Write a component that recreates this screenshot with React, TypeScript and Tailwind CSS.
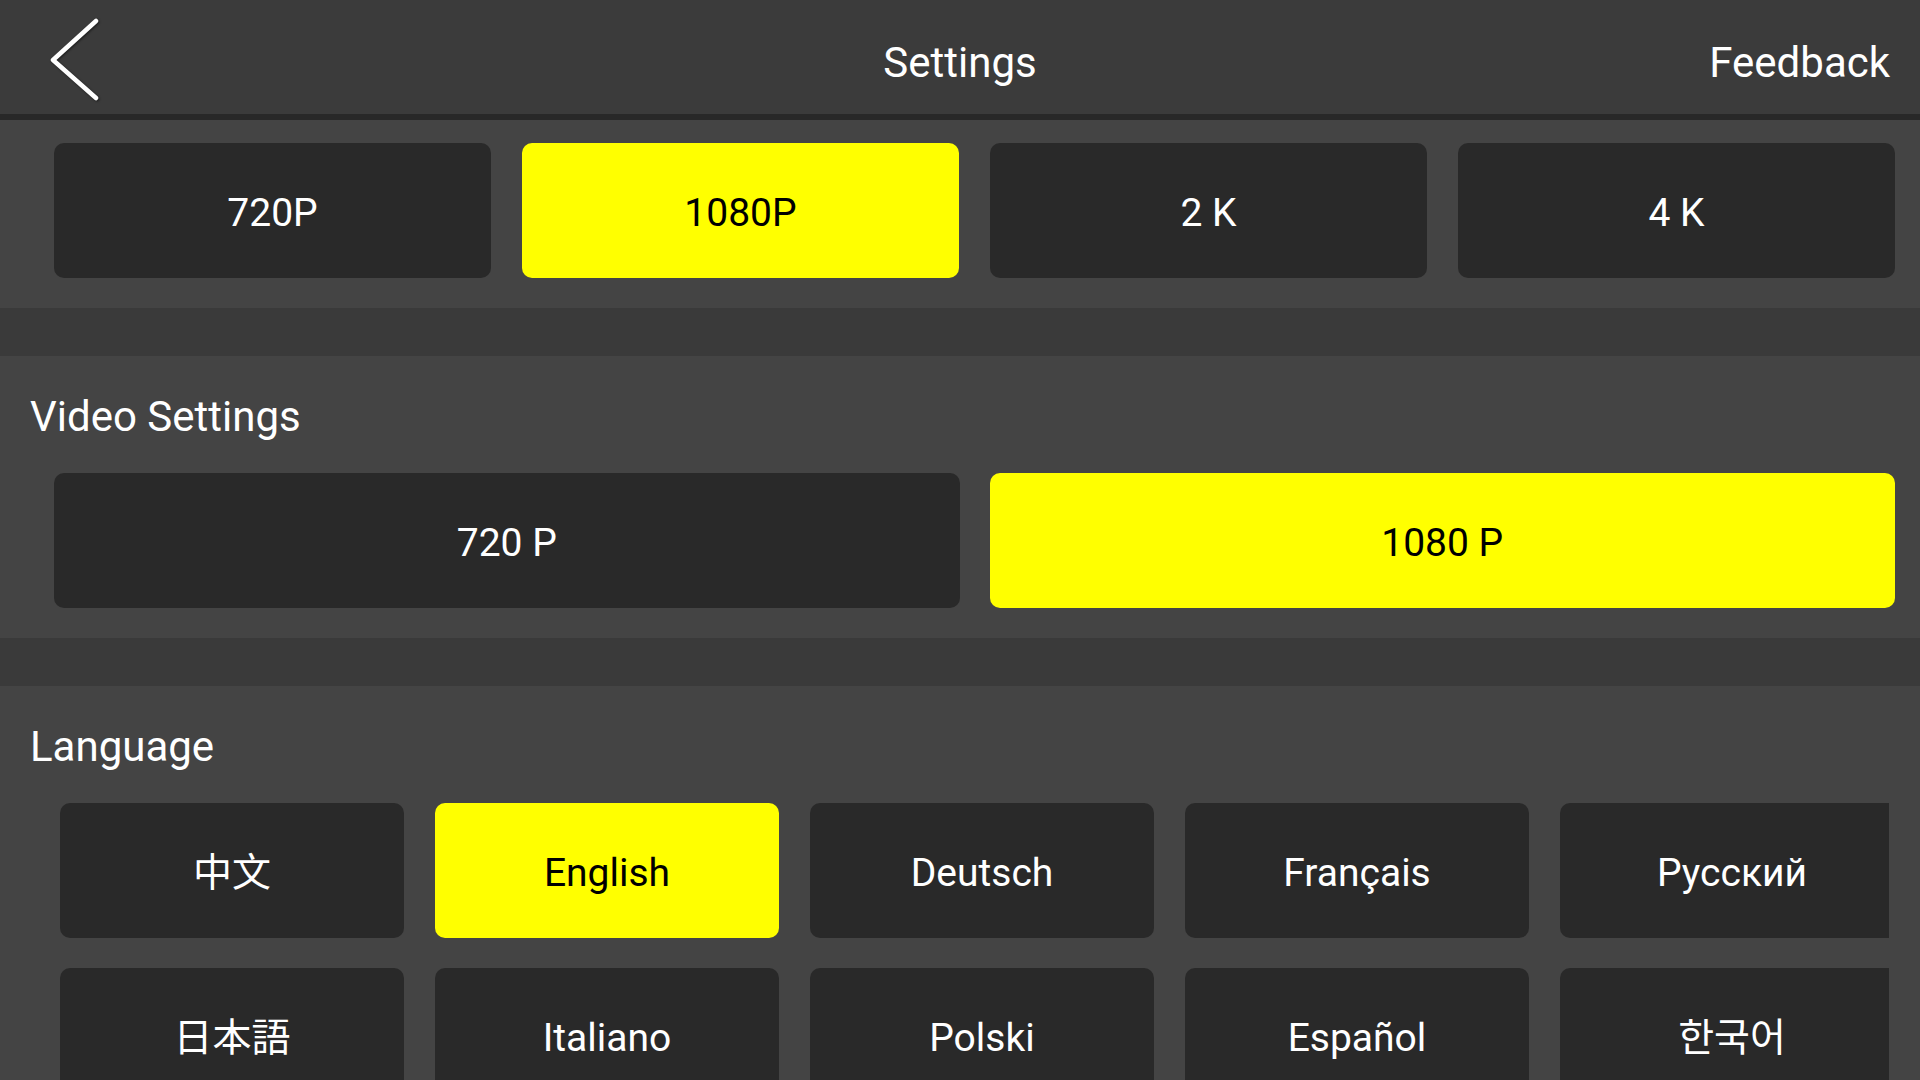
import React from 'react';

const FONT = "font-['Roboto','Noto_Sans_CJK_SC',sans-serif]";

const RESOLUTIONS = [
  { label: "720P", active: false },
  { label: "1080P", active: true },
  { label: "2 K", active: false },
  { label: "4 K", active: false },
];

const VIDEO = [
  { label: "720 P", active: false },
  { label: "1080 P", active: true },
];

const LANGUAGES = [
  { label: "中文", active: false, font: "font-['Roboto','Noto_Sans_CJK_SC',sans-serif]" },
  { label: "English", active: true, font: "" },
  { label: "Deutsch", active: false, font: "" },
  { label: "Français", active: false, font: "" },
  { label: "Русский", active: false, font: "" },
  { label: "日本語", active: false, font: "font-['Roboto','Noto_Sans_CJK_JP',sans-serif]" },
  { label: "Italiano", active: false, font: "" },
  { label: "Polski", active: false, font: "" },
  { label: "Español", active: false, font: "" },
  { label: "한국어", active: false, font: "font-['Roboto','Noto_Sans_CJK_KR',sans-serif]" },
];

function OptionButton({ label, active, className = "" }: { label: string; active: boolean; className?: string }) {
  return (
    <div
      className={`h-[135px] pt-[5px] rounded-[10px] flex items-center justify-center text-[39px] ${
        active ? "bg-[#ffff00] text-black" : "bg-[#292929] text-white"
      } ${className}`}
    >
      {label}
    </div>
  );
}

function SectionTitle({ children }: { children: React.ReactNode }) {
  return <div className="pl-[30px] text-[42px] leading-[50px] text-white">{children}</div>;
}

export default function App() {
  return (
    <div className={`${FONT} h-screen w-full overflow-hidden bg-[#444444]`}>
      {/* header */}
      <header className="h-[114px] bg-[#3b3b3b] grid grid-cols-3 items-center">
        <div className="h-full flex items-start">
          <svg width="120" height="114" viewBox="0 0 120 114" className="drop-shadow-[1px_1px_1px_rgba(0,0,0,0.5)]">
            <polyline
              points="96,21 53,60 96,98"
              fill="none"
              stroke="white"
              strokeWidth="4.5"
              strokeLinecap="round"
              strokeLinejoin="round"
            />
          </svg>
        </div>
        <div className="pt-[12px] text-center text-[42px] leading-[50px] text-white">Settings</div>
        <div className="pt-[12px] pr-[30px] text-right text-[42px] leading-[50px] text-white">Feedback</div>
      </header>
      <div className="h-[6px] bg-[#282828]" />

      {/* resolution */}
      <section className="bg-[#444444] pt-[23px] pb-[30px] pl-[54px] pr-[25px]">
        <div className="grid grid-cols-4 gap-[31px]">
          {RESOLUTIONS.map((r) => (
            <OptionButton key={r.label} label={r.label} active={r.active} />
          ))}
        </div>
      </section>
      <div className="h-[48px] bg-[#3a3a3a]" />

      {/* video settings */}
      <section className="bg-[#444444] pt-[36px] pb-[30px]">
        <SectionTitle>Video Settings</SectionTitle>
        <div className="mt-[31px] pl-[54px] pr-[25px] grid grid-cols-2 gap-[30px]">
          {VIDEO.map((v) => (
            <OptionButton key={v.label} label={v.label} active={v.active} />
          ))}
        </div>
      </section>
      <div className="h-[48px] bg-[#3a3a3a]" />

      {/* language */}
      <section className="bg-[#444444] pt-[36px] pb-[30px]">
        <SectionTitle>Language</SectionTitle>
        <div className="mt-[31px] ml-[60px] w-[1829px] overflow-hidden">
          <div className="w-[1844px] grid grid-cols-5 gap-x-[31px] gap-y-[30px]">
            {LANGUAGES.map((l) => (
              <OptionButton key={l.label} label={l.label} active={l.active} className={l.font} />
            ))}
          </div>
        </div>
      </section>
    </div>
  );
}
